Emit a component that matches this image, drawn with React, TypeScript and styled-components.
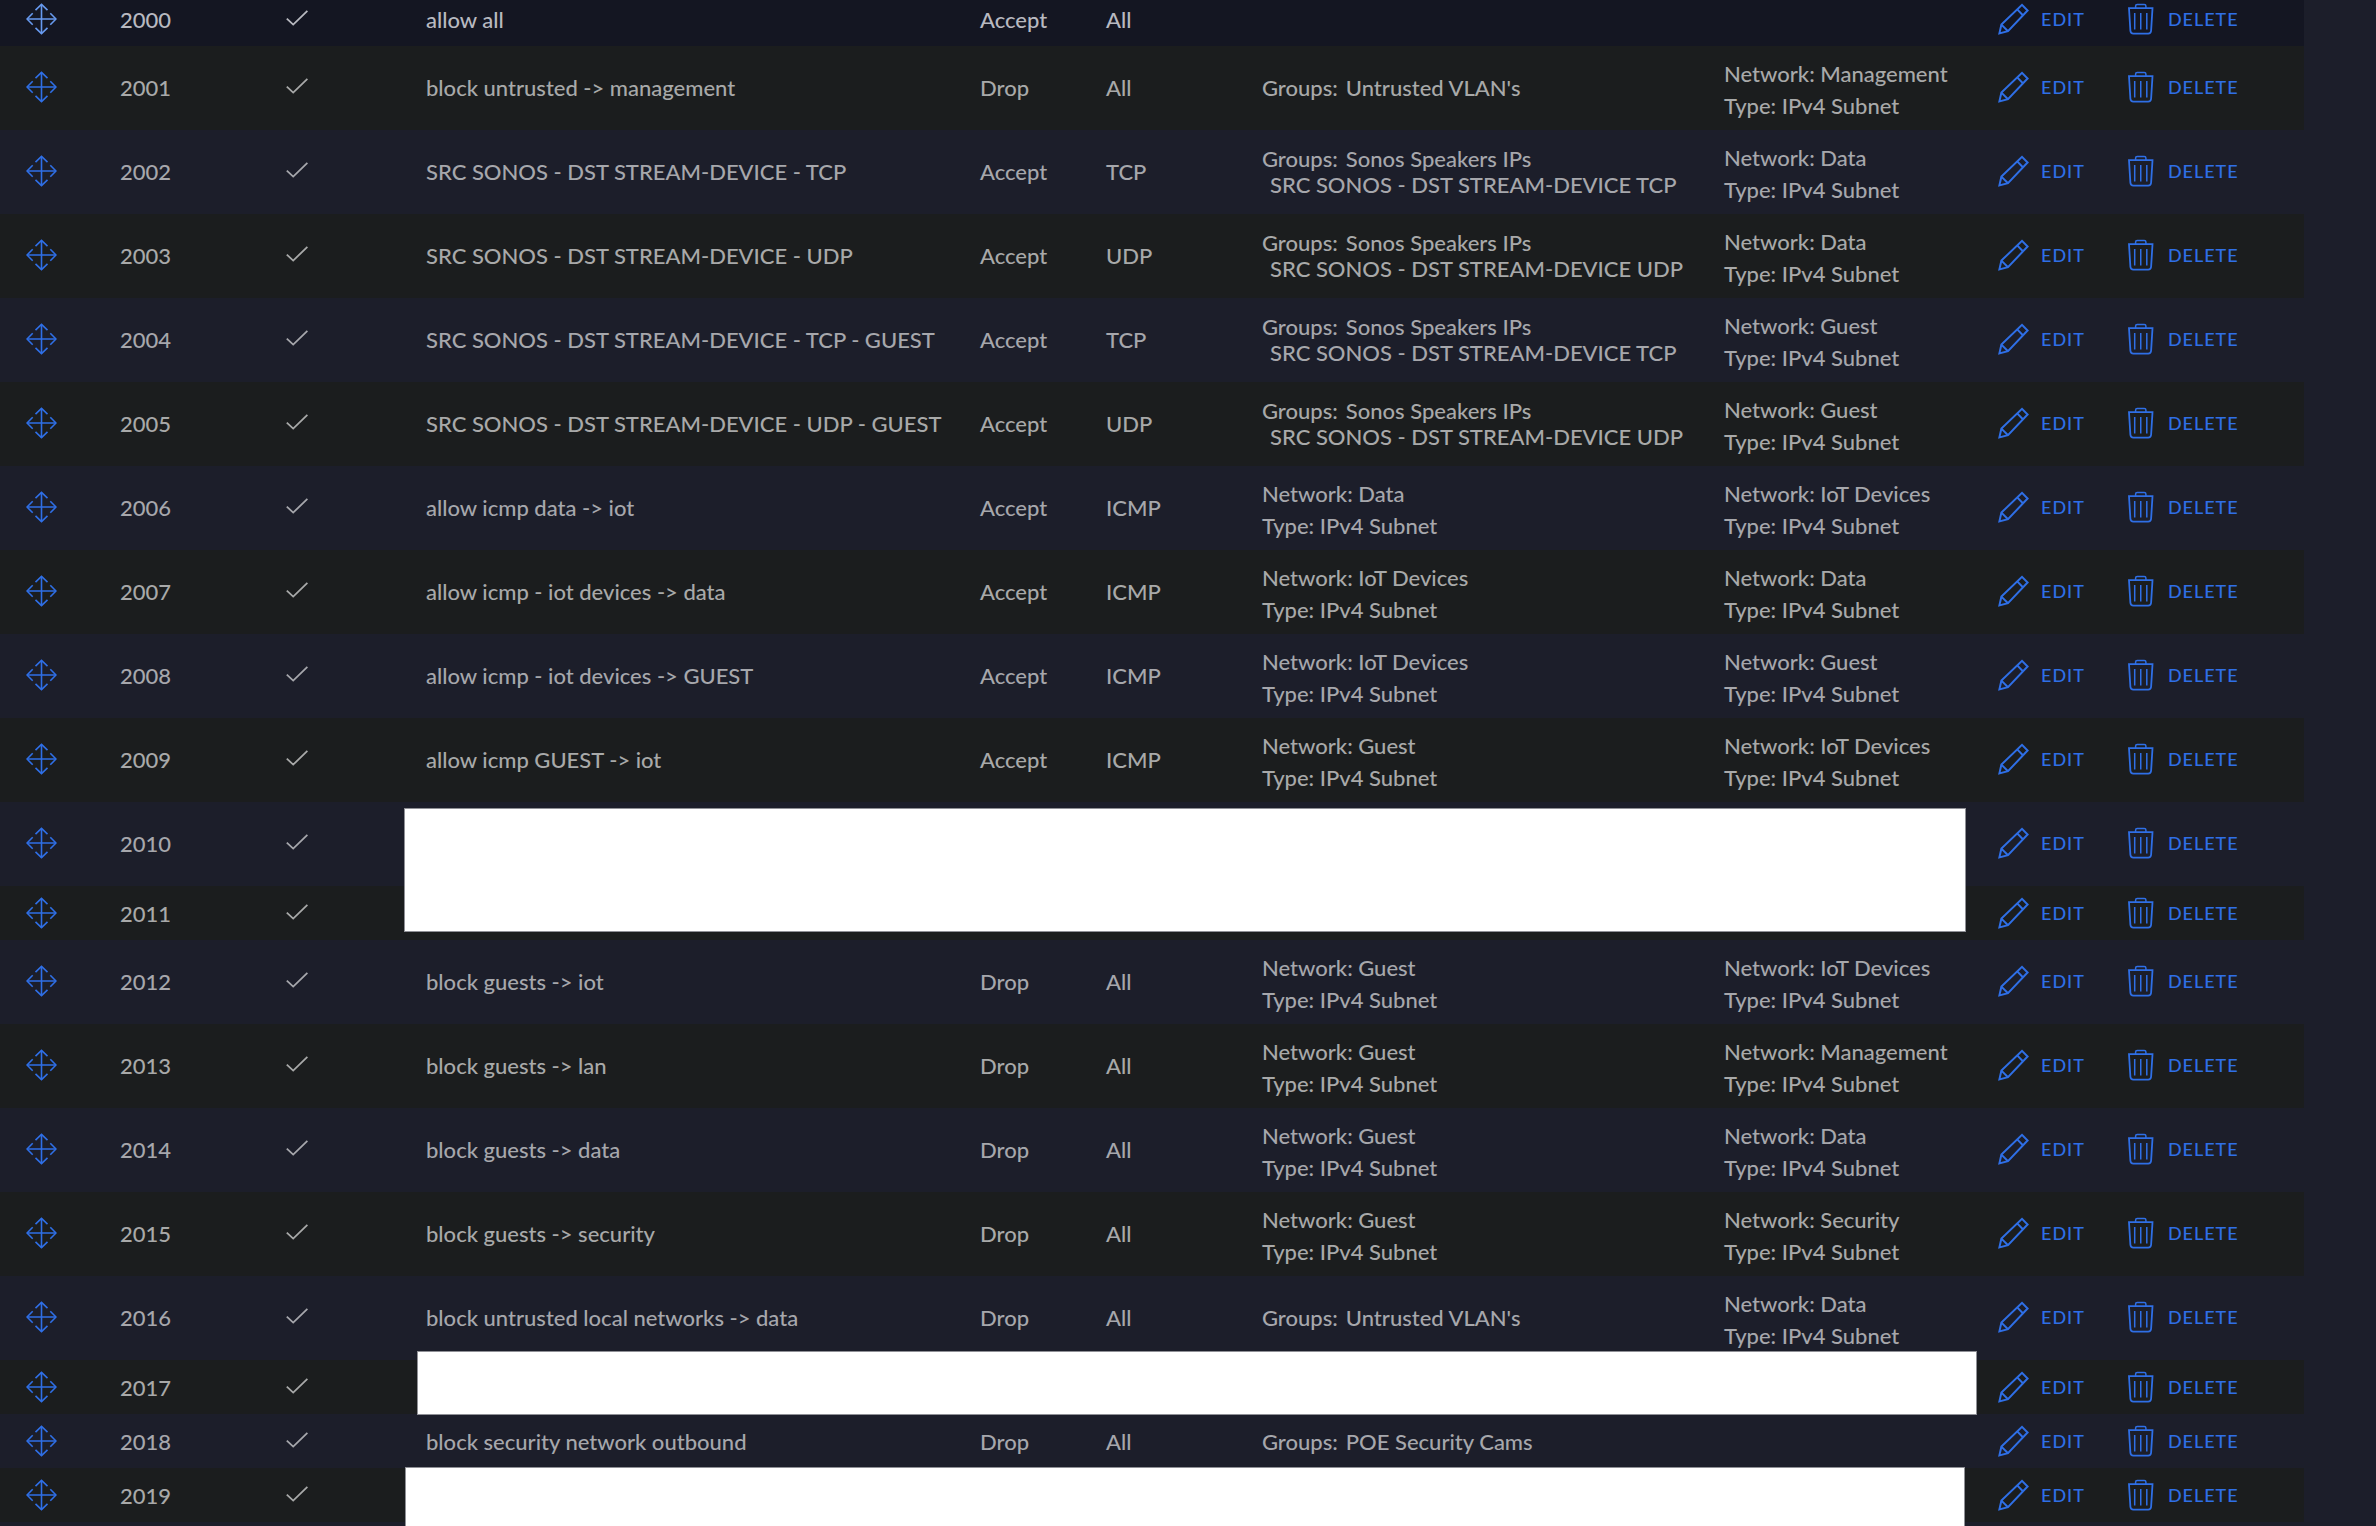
import React from 'react';
import styled, { createGlobalStyle, css } from 'styled-components';

const GlobalStyle = createGlobalStyle`
  html {
    background: #1c1e2a;
  }
  body {
    margin: 0;
    background: #1c1e2a;
    color: #a6a7ac;
    font-family: Lato, "Liberation Sans", sans-serif;
    font-size: 22px;
    font-weight: 500;
    line-height: 32px;
  }
`;

const Page = styled.main`
  height: 100vh;
  box-sizing: border-box;
  padding-right: 72px;
  overflow: hidden;
`;

const Table = styled.table`
  width: 100%;
  margin-top: -8px;
  border-collapse: collapse;
  table-layout: fixed;
`;

const Col = styled.col<{ $width?: number }>`
  width: ${(p) => (p.$width ? `${p.$width}px` : 'auto')};
`;

const Row = styled.tr<{ $tall: boolean; $hovered: boolean }>`
  height: ${(p) => (p.$tall ? 84 : 54)}px;

  &:nth-child(even) {
    background: #1b1d1e;
    color: #a8a9a9;
  }

  && > td {
    padding-top: ${(p) => (p.$tall ? 0 : 2)}px;
  }

  ${(p) =>
    p.$hovered &&
    css`
      background: #141622;
      color: #b8b9c0;
    `}
`;

const Cell = styled.td`
  position: relative;
  padding: 0 0 0 20px;
  vertical-align: middle;
  white-space: nowrap;
`;

const IconCell = styled(Cell)`
  padding: 0 0 2px 26px;
  line-height: 0;
`;

const CheckCell = styled(Cell)`
  padding: 0 0 4px;
  text-align: center;
  line-height: 0;
`;

const Line = styled.div<{ $first?: boolean }>`
  padding-top: ${(p) => (p.$first ? 3 : 0)}px;
`;

const GroupList = styled.div`
  line-height: 26px;
`;

const GroupName = styled.span`
  padding-left: 8px;
`;

const Actions = styled.div`
  display: flex;
  align-items: center;
  gap: 40px;
  padding-bottom: 2px;
`;

const iconButton = css`
  margin: 0;
  padding: 0;
  border: 0;
  background: none;
  color: #2f6fe6;
  cursor: pointer;
`;

const MoveButton = styled.button<{ $hovered: boolean }>`
  ${iconButton}
  color: ${(p) => (p.$hovered ? '#6799ee' : '#2f6fe6')};
  line-height: 0;
`;

const ActionButton = styled.button`
  ${iconButton}
  display: flex;
  align-items: center;
  gap: 12px;
  font-family: inherit;
  font-size: 18px;
  font-weight: 500;
  line-height: 32px;
  letter-spacing: 1px;
  text-transform: uppercase;
`;

const Cover = styled.div<{ $top: number; $left: number; $right: number; $height: number }>`
  position: absolute;
  z-index: 1;
  top: ${(p) => p.$top}px;
  left: ${(p) => p.$left}px;
  right: ${(p) => p.$right}px;
  height: ${(p) => p.$height}px;
  box-sizing: border-box;
  border: 1px solid #8f9096;
  background: #ffffff;
`;

const MoveIcon = () => (
  <svg width="31" height="32" viewBox="0 0 31 32" fill="none" stroke="currentColor" strokeWidth="1.6" aria-hidden="true">
    <path d="M15.5 1.5v29M1 16h29" />
    <path d="M9.500 7.200l6-5.800 6 5.800M9.500 24.800l6 5.800 6-5.800M6.700 10.200L1 16l5.700 5.800M24.300 10.200L30 16l-5.700 5.800" />
  </svg>
);

const CheckIcon = () => (
  <svg width="22" height="16" viewBox="0 0 22 16" fill="none" stroke="currentColor" strokeWidth="1.8" aria-hidden="true">
    <path d="M.8 8.6l6.4 6L21.4.8" />
  </svg>
);

const PencilIcon = () => (
  <svg width="31" height="32" viewBox="0 0 31 32" fill="none" stroke="currentColor" strokeWidth="2" aria-hidden="true">
    <path d="M1.400 30.400l2-8.800L24 1.800l5.600 5.700L10 28.200z" />
    <path d="M3.400 21.600l6.600 6.600M19.200 6.400l5.700 5.800" />
  </svg>
);

const TrashIcon = () => (
  <svg width="31" height="32" viewBox="-3 0 31 32" fill="none" stroke="currentColor" strokeWidth="1.800" aria-hidden="true">
    <path d="M1 5.200h23.500l-1.400 22.600q-.2 2.800-3 2.800H5.400q-2.800 0-3-2.800z" />
    <path d="M7.600 5V3q0-1.600 1.600-1.600h7.100q1.600 0 1.600 1.600v2M6.700 10v16.500M12.750 10v16.500M18.800 10v16.500" strokeWidth="1.500" />
  </svg>
);

type Endpoint = { network: string } | { groups: string[] } | null;

type Rule = {
  index: number;
  name?: string;
  action?: string;
  protocol?: string;
  source?: Endpoint;
  destination?: Endpoint;
  hovered?: boolean;
  tall?: boolean;
  cover?: { top: number; left: number; right: number; height: number };
};

const net = (network: string): Endpoint => ({ network });
const groups = (...names: string[]): Endpoint => ({ groups: names });

const SONOS_TCP = groups('Sonos Speakers IPs', 'SRC SONOS - DST STREAM-DEVICE TCP');
const SONOS_UDP = groups('Sonos Speakers IPs', 'SRC SONOS - DST STREAM-DEVICE UDP');

const rules: Rule[] = [
  { index: 2000, name: 'allow all', action: 'Accept', protocol: 'All', hovered: true },
  { index: 2001, name: 'block untrusted -> management', action: 'Drop', protocol: 'All', source: groups("Untrusted VLAN's"), destination: net('Management') },
  { index: 2002, name: 'SRC SONOS - DST STREAM-DEVICE - TCP', action: 'Accept', protocol: 'TCP', source: SONOS_TCP, destination: net('Data') },
  { index: 2003, name: 'SRC SONOS - DST STREAM-DEVICE - UDP', action: 'Accept', protocol: 'UDP', source: SONOS_UDP, destination: net('Data') },
  { index: 2004, name: 'SRC SONOS - DST STREAM-DEVICE - TCP - GUEST', action: 'Accept', protocol: 'TCP', source: SONOS_TCP, destination: net('Guest') },
  { index: 2005, name: 'SRC SONOS - DST STREAM-DEVICE - UDP - GUEST', action: 'Accept', protocol: 'UDP', source: SONOS_UDP, destination: net('Guest') },
  { index: 2006, name: 'allow icmp data -> iot', action: 'Accept', protocol: 'ICMP', source: net('Data'), destination: net('IoT Devices') },
  { index: 2007, name: 'allow icmp - iot devices -> data', action: 'Accept', protocol: 'ICMP', source: net('IoT Devices'), destination: net('Data') },
  { index: 2008, name: 'allow icmp - iot devices -> GUEST', action: 'Accept', protocol: 'ICMP', source: net('IoT Devices'), destination: net('Guest') },
  { index: 2009, name: 'allow icmp GUEST -> iot', action: 'Accept', protocol: 'ICMP', source: net('Guest'), destination: net('IoT Devices') },
  { index: 2010, tall: true, cover: { top: 6, left: -2, right: 12, height: 124 } },
  { index: 2011 },
  { index: 2012, name: 'block guests -> iot', action: 'Drop', protocol: 'All', source: net('Guest'), destination: net('IoT Devices') },
  { index: 2013, name: 'block guests -> lan', action: 'Drop', protocol: 'All', source: net('Guest'), destination: net('Management') },
  { index: 2014, name: 'block guests -> data', action: 'Drop', protocol: 'All', source: net('Guest'), destination: net('Data') },
  { index: 2015, name: 'block guests -> security', action: 'Drop', protocol: 'All', source: net('Guest'), destination: net('Security') },
  { index: 2016, name: 'block untrusted local networks -> data', action: 'Drop', protocol: 'All', source: groups("Untrusted VLAN's"), destination: net('Data') },
  { index: 2017, cover: { top: -9, left: 11, right: 1, height: 64 } },
  { index: 2018, name: 'block security network outbound', action: 'Drop', protocol: 'All', source: groups('POE Security Cams') },
  { index: 2019, cover: { top: -1, left: -1, right: 13, height: 64 } },
];

const EndpointInfo = ({ value }: { value?: Endpoint }) => {
  if (!value) return null;
  if ('network' in value) {
    return (
      <>
        <Line $first>Network: {value.network}</Line>
        <Line>Type: IPv4 Subnet</Line>
      </>
    );
  }
  return (
    <GroupList>
      {value.groups.map((name, i) => (
        <div key={name}>
          {i === 0 && 'Groups:'}
          <GroupName>{name}</GroupName>
        </div>
      ))}
    </GroupList>
  );
};

const RuleRow = ({ rule }: { rule: Rule }) => {
  const tall = Boolean(rule.tall || rule.destination);
  const hovered = Boolean(rule.hovered);
  const { cover } = rule;
  return (
    <Row $tall={tall} $hovered={hovered}>
      <IconCell>
        <MoveButton type="button" $hovered={hovered} aria-label={`Move rule ${rule.index}`}>
          <MoveIcon />
        </MoveButton>
      </IconCell>
      <Cell>{rule.index}</Cell>
      <CheckCell>
        <CheckIcon />
      </CheckCell>
      {rule.name ? (
        <>
          <Cell>{rule.name}</Cell>
          <Cell>{rule.action}</Cell>
          <Cell>{rule.protocol}</Cell>
          <Cell><EndpointInfo value={rule.source} /></Cell>
          <Cell><EndpointInfo value={rule.destination} /></Cell>
        </>
      ) : (
        <Cell colSpan={5}>
          {cover && <Cover $top={cover.top} $left={cover.left} $right={cover.right} $height={cover.height} />}
        </Cell>
      )}
      <Cell>
        <Actions>
          <ActionButton type="button"><PencilIcon />Edit</ActionButton>
          <ActionButton type="button"><TrashIcon />Delete</ActionButton>
        </Actions>
      </Cell>
    </Row>
  );
};

export default function App() {
  return (
    <>
      <GlobalStyle />
      <Page>
        <Table>
          <colgroup>
            <Col $width={100} />
            <Col $width={88} />
            <Col $width={218} />
            <Col />
            <Col $width={126} />
            <Col $width={156} />
            <Col $width={462} />
            <Col $width={274} />
            <Col $width={326} />
          </colgroup>
          <tbody>
            {rules.map((rule) => (
              <RuleRow key={rule.index} rule={rule} />
            ))}
          </tbody>
        </Table>
      </Page>
    </>
  );
}
